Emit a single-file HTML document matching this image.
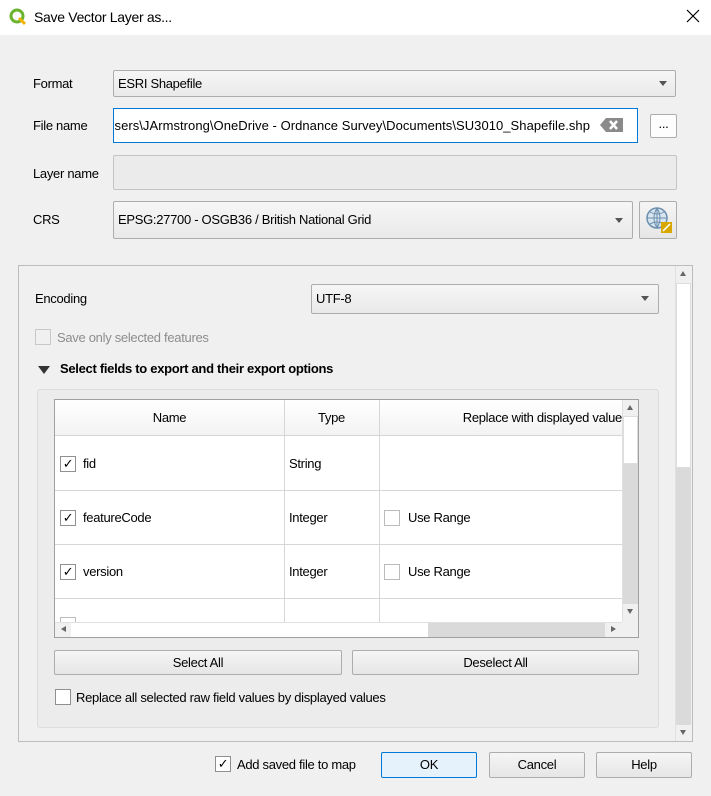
<html><head><style>
body{margin:0;width:711px;height:796px;background:#f0f0f0;font-family:"Liberation Sans",sans-serif;font-size:13px;color:#000;position:relative;overflow:hidden;letter-spacing:-0.3px}
.a{position:absolute;box-sizing:border-box}
.t{position:absolute;white-space:nowrap;line-height:16px}
.combo{background:linear-gradient(#f6f6f6,#e9e9e9);border:1px solid #adadad;border-radius:2px}
.arr{position:absolute;width:0;height:0;border-left:4px solid transparent;border-right:4px solid transparent;border-top:5px solid #555}
.btn{background:linear-gradient(#f5f5f5,#e6e6e6);border:1px solid #adadad;border-radius:2px;text-align:center;line-height:23px}
.cb{position:absolute;width:16px;height:16px;border:1px solid #8f8f8f;background:#fff;box-sizing:border-box;font-size:13px;line-height:14px;text-align:center}
.vl{position:absolute;width:1px;background:#d6d6d6}
.hl{position:absolute;height:1px;background:#d6d6d6}
</style></head><body>
<div class="a" style="left:0;top:0;width:711px;height:35px;background:#fff"></div>
<svg class="a" style="left:9px;top:8px" width="18" height="18" viewBox="0 0 18 18"><circle cx="8" cy="8" r="6" fill="none" stroke="#6bb32e" stroke-width="3"/><path d="M10 10 L16 16" stroke="#f0b400" stroke-width="3"/></svg>
<div class="t" style="left:34px;top:9px;font-size:14px">Save Vector Layer as...</div>
<svg class="a" style="left:686px;top:9px" width="14" height="14" viewBox="0 0 14 14"><path d="M1 1L13 13M13 1L1 13" stroke="#000" stroke-width="1.2"/></svg>

<div class="t" style="left:33px;top:76px">Format</div>
<div class="a combo" style="left:113px;top:70px;width:563px;height:27px"></div>
<div class="t" style="left:118px;top:76px">ESRI Shapefile</div>
<div class="arr" style="left:659px;top:81px"></div>

<div class="t" style="left:33px;top:118px">File name</div>
<div class="a" style="left:113px;top:108px;width:525px;height:35px;background:#fff;border:1px solid #0078d7"></div>
<div class="a" style="left:114px;top:118px;width:476px;height:17px;overflow:hidden"><span class="t" style="right:0;top:0;letter-spacing:0.05px">Users\JArmstrong\OneDrive - Ordnance Survey\Documents\SU3010_Shapefile.shp</span></div>
<svg class="a" style="left:600px;top:117px" width="24" height="16" viewBox="0 0 24 16"><path d="M6 1H23V15H6L0 8Z" fill="#8a8a8a"/><path d="M10 4L17 12M17 4L10 12" stroke="#fff" stroke-width="2.5"/></svg>
<div class="a btn" style="left:650px;top:114px;width:27px;height:24px;line-height:18px;background:#fdfdfd">...</div>

<div class="t" style="left:33px;top:166px">Layer name</div>
<div class="a" style="left:113px;top:155px;width:564px;height:35px;background:#ebebeb;border:1px solid #c4c4c4;border-radius:2px"></div>

<div class="t" style="left:33px;top:212px">CRS</div>
<div class="a combo" style="left:113px;top:201px;width:520px;height:38px"></div>
<div class="t" style="left:118px;top:212px">EPSG:27700 - OSGB36 / British National Grid</div>
<div class="arr" style="left:615px;top:218px"></div>
<div class="a btn" style="left:639px;top:201px;width:38px;height:38px"></div>
<svg class="a" style="left:644px;top:205px" width="30" height="30" viewBox="0 0 30 30"><circle cx="13" cy="13" r="10" fill="#d8e4ee" stroke="#6b8fae" stroke-width="1.5"/><path d="M3 13H23M13 3V23M6 7Q13 11 20 7M6 19Q13 15 20 19M13 3Q7 13 13 23M13 3Q19 13 13 23" stroke="#6b8fae" fill="none"/><rect x="17" y="17" width="11" height="11" fill="#d9a800"/><path d="M19 26L26 19" stroke="#fff" stroke-width="1.5"/></svg>

<div class="a" style="left:18px;top:265px;width:675px;height:477px;border:1px solid #bcbcbc;background:#f0f0f0"></div>
<div class="a" style="left:675px;top:266px;width:17px;height:475px;background:#f0f0f0;border-left:1px solid #e0e0e0"></div>
<div class="a" style="left:676px;top:283px;width:15px;height:185px;background:#fff;border:1px solid #ddd"></div>
<div class="a" style="left:676px;top:468px;width:15px;height:257px;background:#dadada"></div>
<div class="arr" style="left:680px;top:271px;border-top:none;border-bottom:5px solid #666;border-left-width:3.5px;border-right-width:3.5px"></div>
<div class="arr" style="left:680px;top:730px;border-left-width:3.5px;border-right-width:3.5px;border-top-color:#666"></div>

<div class="t" style="left:35px;top:291px">Encoding</div>
<div class="a combo" style="left:311px;top:284px;width:348px;height:30px"></div>
<div class="t" style="left:316px;top:291px">UTF-8</div>
<div class="arr" style="left:641px;top:296px"></div>

<div class="cb" style="left:35px;top:329px;border-color:#c8c8c8;background:#f0f0f0"></div>
<div class="t" style="left:57px;top:330px;color:#8d8d8d">Save only selected features</div>
<div class="arr" style="left:38px;top:366px;border-left-width:6px;border-right-width:6px;border-top:8px solid #333"></div>
<div class="t" style="left:60px;top:361px;font-weight:bold">Select fields to export and their export options</div>

<div class="a" style="left:37px;top:389px;width:622px;height:339px;border:1px solid #dcdcdc;border-radius:3px;background:#ececec"></div>
<div class="a" style="left:54px;top:399px;width:585px;height:239px;background:#fff;border:1px solid #a0a0a0"></div>
<div class="a" style="left:55px;top:400px;width:567px;height:36px;background:linear-gradient(#fff,#f3f3f3);border-bottom:1px solid #d6d6d6"></div>
<div class="t" style="left:55px;top:410px;width:229px;text-align:center">Name</div>
<div class="t" style="left:284px;top:410px;width:95px;text-align:center">Type</div>
<div class="t" style="left:380px;top:410px;width:242px;overflow:hidden;text-align:right">Replace with displayed value</div>
<div class="vl" style="left:284px;top:400px;height:222px"></div>
<div class="vl" style="left:379px;top:400px;height:222px"></div>
<div class="hl" style="left:55px;top:490px;width:567px"></div>
<div class="hl" style="left:55px;top:544px;width:567px"></div>
<div class="hl" style="left:55px;top:598px;width:567px"></div>

<div class="cb" style="left:60px;top:456px">✓</div><div class="t" style="left:83px;top:456px">fid</div><div class="t" style="left:289px;top:456px">String</div>
<div class="cb" style="left:60px;top:510px">✓</div><div class="t" style="left:83px;top:510px">featureCode</div><div class="t" style="left:289px;top:510px">Integer</div>
<div class="cb" style="left:384px;top:510px;border-color:#bbb"></div><div class="t" style="left:408px;top:510px">Use Range</div>
<div class="cb" style="left:60px;top:564px">✓</div><div class="t" style="left:83px;top:564px">version</div><div class="t" style="left:289px;top:564px">Integer</div>
<div class="cb" style="left:384px;top:564px;border-color:#bbb"></div><div class="t" style="left:408px;top:564px">Use Range</div>
<div class="cb" style="left:60px;top:617px;height:5px;border-bottom:none;border-color:#bbb"></div>

<div class="a" style="left:622px;top:400px;width:16px;height:222px;background:#f0f0f0;border-left:1px solid #e0e0e0"></div>
<div class="a" style="left:623px;top:416px;width:15px;height:48px;background:#fff;border:1px solid #ddd"></div>
<div class="a" style="left:623px;top:464px;width:15px;height:140px;background:#dadada"></div>
<div class="arr" style="left:627px;top:405px;border-top:none;border-bottom:5px solid #666;border-left-width:3.5px;border-right-width:3.5px"></div>
<div class="arr" style="left:627px;top:609px;border-left-width:3.5px;border-right-width:3.5px;border-top-color:#666"></div>
<div class="a" style="left:55px;top:622px;width:567px;height:15px;background:#f0f0f0;border-top:1px solid #e0e0e0"></div>
<div class="a" style="left:71px;top:623px;width:357px;height:14px;background:#fff"></div>
<div class="a" style="left:428px;top:623px;width:177px;height:14px;background:#dadada"></div>
<div class="arr" style="left:61px;top:626px;border:3.5px solid transparent;border-right:5px solid #666;border-left:none"></div>
<div class="arr" style="left:611px;top:626px;border:3.5px solid transparent;border-left:5px solid #666;border-right:none"></div>
<div class="a" style="left:622px;top:622px;width:16px;height:15px;background:#f0f0f0"></div>

<div class="a btn" style="left:54px;top:650px;width:288px;height:25px">Select All</div>
<div class="a btn" style="left:352px;top:650px;width:287px;height:25px">Deselect All</div>
<div class="cb" style="left:55px;top:689px"></div>
<div class="t" style="left:76px;top:690px">Replace all selected raw field values by displayed values</div>

<div class="cb" style="left:215px;top:756px">✓</div>
<div class="t" style="left:237px;top:757px">Add saved file to map</div>
<div class="a btn" style="left:381px;top:752px;width:96px;height:26px;border-color:#0078d7;background:#e5f1fb">OK</div>
<div class="a btn" style="left:489px;top:752px;width:96px;height:26px">Cancel</div>
<div class="a btn" style="left:596px;top:752px;width:96px;height:26px">Help</div>
</body></html>
